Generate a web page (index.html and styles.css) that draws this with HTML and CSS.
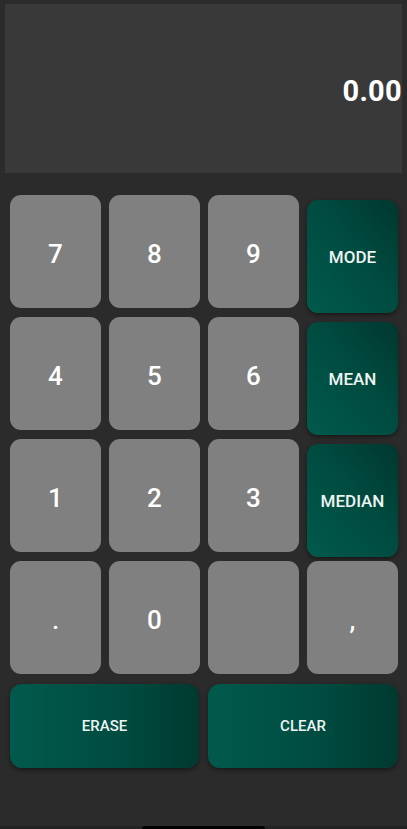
FILE: index.html
```html
<!DOCTYPE html>
<html lang="en">
<head>
<meta charset="utf-8">
<title>Stats Calculator</title>
<link rel="stylesheet" href="styles.css">
</head>
<body>
<main class="app">
  <section class="display"><span class="value">0.00</span></section>
  <section class="keypad">
    <button class="key num">7</button>
    <button class="key num">8</button>
    <button class="key num">9</button>
    <button class="key op">MODE</button>
    <button class="key num">4</button>
    <button class="key num">5</button>
    <button class="key num">6</button>
    <button class="key op">MEAN</button>
    <button class="key num">1</button>
    <button class="key num">2</button>
    <button class="key num">3</button>
    <button class="key op">MEDIAN</button>
    <button class="key num">.</button>
    <button class="key num">0</button>
    <button class="key num"></button>
    <button class="key num">,</button>
  </section>
  <section class="actions">
    <button class="key action">ERASE</button>
    <button class="key action">CLEAR</button>
  </section>
</main>
<div class="navbar"><span class="pill"></span></div>
</body>
</html>
```
FILE: styles.css
```css
html, body {
  margin: 0;
  padding: 0;
}
body {
  width: 407px;
  height: 829px;
  background: #2b2b2b;
  font-family: Roboto, "Noto Sans", sans-serif;
  display: flex;
  flex-direction: column;
  overflow: hidden;
}
.app {
  display: flex;
  flex-direction: column;
}
.display {
  margin: 4px 5px 0 5px;
  height: 169px;
  background: #393939;
  display: flex;
  align-items: center;
  justify-content: flex-end;
  padding-top: 4px;
  box-sizing: border-box;
}
.value {
  color: #ffffff;
  font-size: 29px;
  font-weight: 700;
  letter-spacing: 0.3px;
}
.keypad {
  margin: 22px 9px 0 10px;
  display: grid;
  grid-template-columns: repeat(4, 91px);
  grid-template-rows: repeat(4, 113px);
  column-gap: 8px;
  row-gap: 9px;
}
.key {
  border: none;
  margin: 0;
  padding: 0;
  color: #ffffff;
  font-family: Roboto, "Noto Sans", sans-serif;
  display: flex;
  align-items: center;
  justify-content: center;
}
.num {
  background: #808080;
  border-radius: 11px;
  font-size: 26px;
  font-weight: 500;
  padding-top: 4px;
}
.op {
  margin-top: 5px;
  height: 113px;
  border-radius: 11px;
  background: linear-gradient(to top right, #005a4c 0%, #004b40 55%, #00372f 100%);
  box-shadow: 0 2px 4px rgba(0, 0, 0, 0.45);
  color: #eef4f2;
  font-size: 17px;
  font-weight: 500;
  padding-top: 1px;
}
.actions {
  margin: 10px 9px 0 10px;
  display: grid;
  grid-template-columns: 189px 190px;
  column-gap: 9px;
}
.action {
  height: 84px;
  border-radius: 12px;
  background: linear-gradient(to right, #005a4c 0%, #004b40 60%, #00392f 100%);
  box-shadow: 0 2px 4px rgba(0, 0, 0, 0.45);
  color: #eef4f2;
  font-size: 15px;
  font-weight: 500;
}
.navbar {
  margin-top: auto;
  height: 3px;
  background: #232323;
  display: flex;
  justify-content: center;
}
.pill {
  width: 123px;
  height: 3px;
  background: #000000;
  border-radius: 3px 3px 0 0;
}
```
